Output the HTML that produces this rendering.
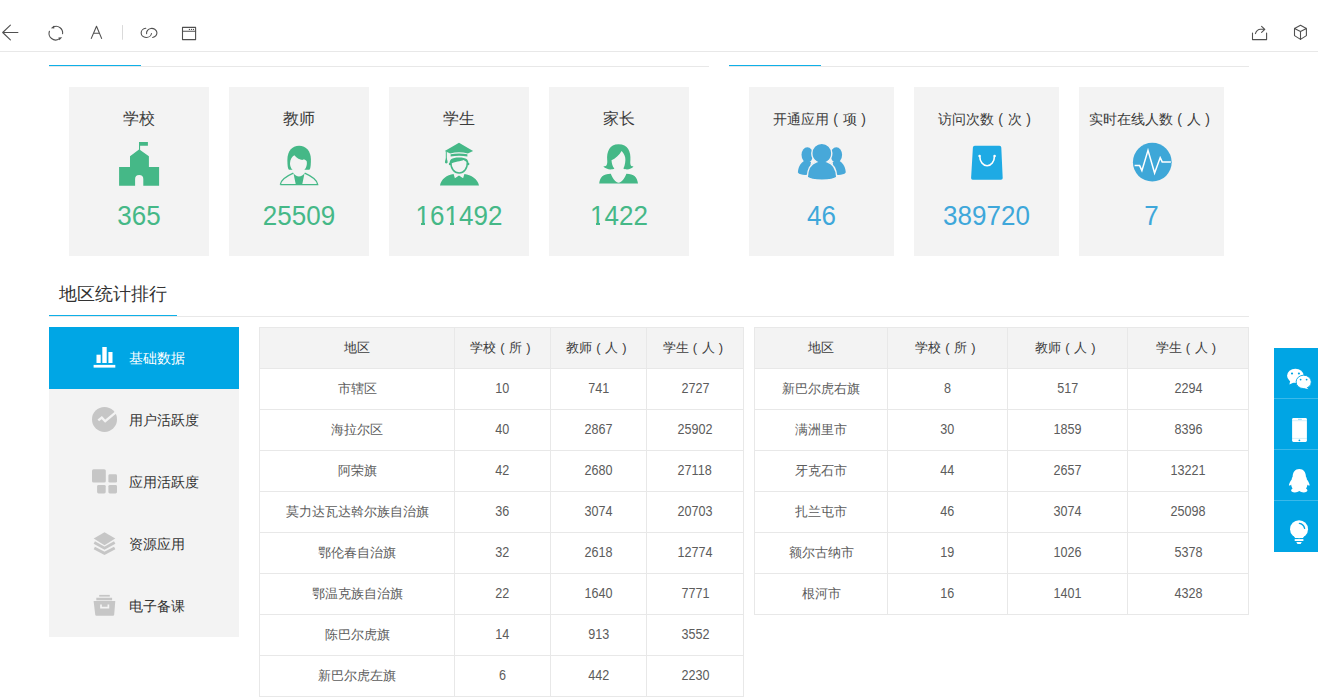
<!DOCTYPE html>
<html><head><meta charset="utf-8">
<style>
*{box-sizing:border-box;margin:0;padding:0}
html,body{width:1318px;height:698px;overflow:hidden;background:#fff}
body{position:relative;font-family:"Liberation Sans",sans-serif;color:#333}
.abs{position:absolute}
.tb{position:absolute;left:0;top:0;width:1318px;height:52px;border-bottom:1px solid #e8e8e8;background:#fff}
.hl{position:absolute;height:1px;background:#e8e8e8}
.bl{position:absolute;height:1px;background:#0eb0e8}
.card{position:absolute;top:87px;height:169px;background:#f3f3f3;text-align:center}
.ct{position:absolute;left:0;right:0;top:17px;line-height:30px;color:#3c3c3c;white-space:nowrap}
.cn{position:absolute;left:0;right:0;top:114px;font-size:26px;line-height:30px;transform:scaleY(1.05);transform-origin:50% 70%}
svg{position:absolute;overflow:visible}
i.p{display:inline-block;width:1em;text-align:center;font-style:normal}
.menu{position:absolute;left:49px;top:327px;width:190px;height:310px;background:#f3f3f3}
.mi{position:absolute;left:0;width:190px;height:62px;font-size:14px;color:#333}
.mi span{position:absolute;left:80px;top:0;line-height:62px;white-space:nowrap}
.mi.on{background:#00a6e5;color:#fff}
.tbl{position:absolute;top:327px;border-left:1px solid #e8e8e8;border-top:1px solid #e8e8e8}
.row{display:flex;height:41px}
.row.h{background:#f3f3f3}
.c{border-right:1px solid #e8e8e8;border-bottom:1px solid #e8e8e8;text-align:center;line-height:40px;font-size:13px;color:#5c5c5c;white-space:nowrap}
.row.h .c{color:#3c3c3c}
b.d{font-weight:normal;display:inline-block;transform:scale(0.97,1.1);transform-origin:50% 24px}
.side{position:absolute;left:1274px;top:348px;width:44px;height:204px;background:#00a5e4}
.si{position:absolute;left:0;width:44px;height:1px;background:#3ab9ea}
</style></head><body>
<div class="tb"><svg style="left:0;top:0" width="1318" height="52" viewBox="0 0 1318 52"><g fill="none" stroke="#505050" stroke-width="1.1" stroke-linecap="round" stroke-linejoin="round"><path d="M17.9 32.5H2.7M10.4 25.1L2.7 32.5L10.4 39.9"/><path d="M53.6 26.8A6.6 6.6 0 0 1 62.6 33.8"/><path d="M49.4 31.2A6.6 6.6 0 0 0 59.2 38.9"/><path d="M91.3 38.4L96.5 26.2L101.6 38.4M93.6 33.2H99.4"/><path d="M145.8 28.3A5.2 4.6 0 1 0 151.5 33.5"/><path d="M146.6 33.7A5.2 4.6 0 1 1 152.6 37.5"/><rect x="182.5" y="27.4" width="13.1" height="12.2"/><path d="M182.5 31.3H195.6"/><path d="M1252.5 33V39.6H1266.6V33"/><path d="M1255.4 33.6Q1257 29.3 1260.5 29.3H1264.8M1261.6 26.3L1264.8 29.3L1261.6 32.4"/><path d="M1300.5 25.3L1306.4 28.4V35.6L1300.5 39.4L1294.5 35.6V28.4ZM1294.5 28.4L1300.5 31.5L1306.4 28.4M1300.5 31.5V39.4"/></g><g fill="#505050"><path d="M50.8 28.2L54.2 25.6L54.3 28.6Z"/><path d="M62.2 37.3L58.4 37.6L59.4 40.2Z"/><circle cx="189.4" cy="29.4" r="0.65"/><circle cx="191.5" cy="29.4" r="0.65"/><circle cx="193.5" cy="29.4" r="0.65"/></g><path d="M122.5 25.1V39.7" stroke="#dadada" stroke-width="1"/></svg></div>
<div class="hl" style="left:49px;top:66px;width:660px"></div>
<div class="bl" style="left:49px;top:65px;width:92px"></div>
<div class="hl" style="left:729px;top:66px;width:520px"></div>
<div class="bl" style="left:729px;top:65px;width:92px"></div>
<div class="card" style="left:69px;width:140px">
<div class="ct" style="font-size:16px">学校</div>
<div class="cn" style="color:#45b887">365</div>
</div>
<div class="card" style="left:229px;width:140px">
<div class="ct" style="font-size:16px">教师</div>
<div class="cn" style="color:#45b887">25509</div>
</div>
<div class="card" style="left:389px;width:140px">
<div class="ct" style="font-size:16px">学生</div>
<div class="cn" style="color:#45b887">161492</div>
</div>
<div class="card" style="left:549px;width:140px">
<div class="ct" style="font-size:16px">家长</div>
<div class="cn" style="color:#45b887">1422</div>
</div>
<div class="card" style="left:749px;width:145px">
<div class="ct" style="font-size:14px">开通应用<i class="p">(</i>项<i class="p">)</i></div>
<div class="cn" style="color:#3ea7da">46</div>
</div>
<div class="card" style="left:914px;width:145px">
<div class="ct" style="font-size:14px">访问次数<i class="p">(</i>次<i class="p">)</i></div>
<div class="cn" style="color:#3ea7da">389720</div>
</div>
<div class="card" style="left:1079px;width:145px">
<div class="ct" style="font-size:14px">实时在线人数<i class="p">(</i>人<i class="p">)</i></div>
<div class="cn" style="color:#3ea7da">7</div>
</div>
<div class="abs" style="left:416px;top:222.6px;width:5px;height:2.6px;background:#f3f3f3"></div><div class="abs" style="left:425px;top:222.6px;width:5px;height:2.6px;background:#f3f3f3"></div><div class="abs" style="left:445px;top:222.6px;width:5px;height:2.6px;background:#f3f3f3"></div><div class="abs" style="left:454px;top:222.6px;width:5px;height:2.6px;background:#f3f3f3"></div><div class="abs" style="left:590px;top:222.6px;width:6px;height:2.6px;background:#f3f3f3"></div><div class="abs" style="left:600px;top:222.6px;width:5px;height:2.6px;background:#f3f3f3"></div><svg style="left:114px;top:138px" width="50" height="52" viewBox="0 0 50 52"><path fill="#45b887" d="M25 4.1h8.9v3.7H26.1v4.2L34.9 18.3V29.1H45.1V47.7H29.3V41A4.1 4.1 0 0 0 21.1 41V47.7H5.1V29.1H16V18.3L25 11.6Z"/></svg>
<svg style="left:274px;top:138px" width="50" height="52" viewBox="0 0 50 52"><path fill="#45b887" d="M15 31.8C13.7 30.6 13.4 27 13.4 21.5C13.4 13.5 18 7.8 25.1 7.8C32.2 7.8 36.9 13.5 36.9 21.5C36.9 27 36.6 30.6 35.3 31.8Z"/>
<path fill="#f3f3f3" d="M20.3 17.2C23 20.3 25.8 21.6 28.4 21.9C29.6 21.2 31.6 21.6 32.8 23.4C33.6 30 29.2 34.6 24.6 34.6C19.8 34.6 15.8 30.2 16 25.2C16.2 21.2 18 18.6 20.3 17.2Z"/>
<path fill="none" stroke="#45b887" stroke-width="1.3" d="M6.3 46.6C6.8 42.5 11.5 38.6 19.3 35.2M30.7 35.2C38.5 38.6 43.2 42.5 43.7 46.6H6.3"/>
<path fill="#45b887" d="M19.4 35C22 39.5 28 39.5 30.6 35L28.2 46.6H21.8Z"/></svg>
<svg style="left:434px;top:138px" width="50" height="52" viewBox="0 0 50 52"><path fill="#45b887" d="M10.8 13L25 4.8L39.1 13L33.8 15.4C28 14 22 14 16.2 15.4Z"/>
<path fill="#45b887" d="M16.6 16.3C22 15.1 28 15.1 33.4 16.3V18.6C28 17.6 22 17.6 16.6 18.6Z"/>
<path fill="#45b887" d="M15.8 26C15.2 21.5 17.5 19.4 25 19.4C32.5 19.4 34.8 21.5 34.2 26C33 24 31 22.6 29.6 21.9C27 23.2 21 23.2 15.8 26Z"/>
<path fill="none" stroke="#45b887" stroke-width="1.5" d="M16.8 23.5C16.6 31 20.4 35 25.1 35C29.8 35 33.6 31 33.4 23.5"/>
<circle cx="16" cy="26" r="1.2" fill="#45b887"/><circle cx="34.2" cy="26" r="1.2" fill="#45b887"/>
<path fill="none" stroke="#45b887" stroke-width="1" d="M12.3 13.4V21"/>
<path fill="#45b887" d="M12.3 19.5C13.2 21.5 13.8 23.5 13.6 24.8Q12.3 26.2 11 24.8C10.8 23.5 11.4 21.5 12.3 19.5Z"/>
<path fill="#45b887" d="M6 47.6C7 41 13 37 19.6 36L20.9 40.2L25 37.6L29.1 40.2L30.4 36C37 37 44 41 45 47.6Z"/></svg>
<svg style="left:594px;top:138px" width="50" height="52" viewBox="0 0 50 52"><path fill="#45b887" d="M24.5 6.3C34 6.3 37 14 36.4 22C36 26.5 36.6 28.8 39.5 28.3C37.5 31.8 31.5 32 29.4 30.5C31 27.5 31.8 22.5 31.2 19.5C30.6 16.8 29 14.5 27.6 13C25.2 17.2 21.4 20.5 17.5 22.2C17.8 25.8 18.6 28.8 20.4 30.5C18 32 12 31.8 9.3 28.3C12.6 28.8 13.6 26.5 13.2 22C12.6 14 15.5 6.3 24.5 6.3Z"/>
<path fill="#45b887" d="M5.2 45.6C5.8 39.5 9 35.8 16.8 35.8C19 41.5 22 44.7 24.6 44.7S30.2 41.5 32.4 35.8C40 35.8 43.4 39.5 44 45.6Z"/></svg>
<svg style="left:796px;top:138px" width="50" height="52" viewBox="0 0 50 52"><g fill="#47a8d9">
<ellipse cx="11.3" cy="16.8" rx="5.8" ry="7.6"/><path d="M9 22.2C4 25 1.9 30 1.9 34.6C3.5 37 8 37.2 12.5 36.8L15 24Z"/>
<ellipse cx="40.3" cy="16.8" rx="5.8" ry="7.6"/><path d="M42.6 22.2C47.6 25 49.7 30 49.7 34.6C48.1 37 43.6 37.2 39.1 36.8L36.6 24Z"/>
</g>
<g fill="#47a8d9" stroke="#f3f3f3" stroke-width="1.4">
<path d="M25.8 5.4C31.6 5.4 35.8 9.8 35.8 15.3C35.8 19 33.8 22.2 31.2 23.8C37 25.5 40.4 30 40.8 39.4C36.5 43 15.5 43 11.2 39.4C11.6 30 15 25.5 20.6 23.8C17.8 22.2 15.8 19 15.8 15.3C15.8 9.8 20 5.4 25.8 5.4Z"/>
</g></svg>
<svg style="left:961px;top:138px" width="50" height="52" viewBox="0 0 50 52"><path fill="#1eaae4" d="M13.8 7.8H38.4Q40.2 7.8 40.3 9.6L41.7 40Q41.8 41.7 40 41.7H11.7Q10 41.7 10.1 40L11.9 9.6Q12 7.8 13.8 7.8Z"/>
<path fill="none" stroke="#fff" stroke-width="1.6" d="M18.8 18.4A7.3 9.4 0 0 0 33.4 18.4"/>
<circle cx="18.6" cy="18" r="1.3" fill="#fff"/><circle cx="33.6" cy="18" r="1.3" fill="#fff"/></svg>
<svg style="left:1126px;top:138px" width="50" height="52" viewBox="0 0 50 52"><circle cx="26.3" cy="24.2" r="19.4" fill="#3ea7d8"/>
<path fill="none" stroke="#fff" stroke-width="1.5" stroke-linejoin="miter" d="M8.6 27.6H13.6L15.9 32.6L22 12.4L28.6 35L34.2 19.6L36.2 23.9H44.9"/></svg>
<div class="abs" style="left:59px;top:279px;font-size:18px;line-height:30px;color:#333">地区统计排行</div>
<div class="hl" style="left:49px;top:316px;width:1200px"></div>
<div class="bl" style="left:49px;top:315px;width:128px"></div>
<div class="menu">
<div class="mi on" style="top:0px"><span>基础数据</span></div>
<div class="mi" style="top:62px"><span>用户活跃度</span></div>
<div class="mi" style="top:124px"><span>应用活跃度</span></div>
<div class="mi" style="top:186px"><span>资源应用</span></div>
<div class="mi" style="top:248px"><span>电子备课</span></div>
</div>
<svg style="left:0;top:0;pointer-events:none" width="1318" height="698" viewBox="0 0 1318 698">
<g fill="#fff"><rect x="96.5" y="354.7" width="4.2" height="8.3"/><rect x="102.3" y="347" width="4.4" height="16"/><rect x="108.4" y="352" width="4.1" height="11"/><rect x="93.6" y="364.9" width="21.7" height="2.7"/></g>
<g fill="#c6c6c6">
<circle cx="104.5" cy="419.4" r="12.5"/>
<rect x="92" y="469.2" width="13.8" height="13.4" rx="1.6"/><rect x="108.4" y="474.3" width="8.6" height="8.3" rx="1.4"/><rect x="97.1" y="484.9" width="8.6" height="8.5" rx="1.4"/><rect x="108.4" y="484.9" width="8.6" height="8.5" rx="1.4"/>
<path d="M93.7 538.6L104.5 532.3L115.3 538.6L104.5 545.2Z"/>
<path d="M93.6 600.9H115.3L114.2 614.6Q114.1 615.8 112.9 615.8H96.5Q95.3 615.8 95.2 614.6Z"/>
<rect x="99.2" y="594.9" width="10.6" height="1.7"/><rect x="96.3" y="597.75" width="15.8" height="2.55"/>
</g>
<g fill="none" stroke="#c6c6c6" stroke-width="2.8" stroke-linejoin="miter">
<path d="M94.3 542.6L104.5 548.2L114.7 542.6"/><path d="M94.3 547.9L104.5 553.3L114.7 547.9"/>
</g>
<path d="M98.3 420.4L101.8 417.6L105.2 421.2L115.8 412.4" fill="none" stroke="#f3f3f3" stroke-width="2.4"/>
<path d="M101 604.6V607.6H108.4V604.6" fill="none" stroke="#f3f3f3" stroke-width="1.7"/>
</svg><div class="tbl" style="left:259px;width:485px">
<div class="row h"><div class="c" style="width:195px">地区</div><div class="c" style="width:96px">学校<i class="p">(</i>所<i class="p">)</i></div><div class="c" style="width:96px">教师<i class="p">(</i>人<i class="p">)</i></div><div class="c" style="width:97px">学生<i class="p">(</i>人<i class="p">)</i></div></div>
<div class="row"><div class="c" style="width:195px">市辖区</div><div class="c" style="width:96px"><b class="d">10</b></div><div class="c" style="width:96px"><b class="d">741</b></div><div class="c" style="width:97px"><b class="d">2727</b></div></div>
<div class="row"><div class="c" style="width:195px">海拉尔区</div><div class="c" style="width:96px"><b class="d">40</b></div><div class="c" style="width:96px"><b class="d">2867</b></div><div class="c" style="width:97px"><b class="d">25902</b></div></div>
<div class="row"><div class="c" style="width:195px">阿荣旗</div><div class="c" style="width:96px"><b class="d">42</b></div><div class="c" style="width:96px"><b class="d">2680</b></div><div class="c" style="width:97px"><b class="d">27118</b></div></div>
<div class="row"><div class="c" style="width:195px">莫力达瓦达斡尔族自治旗</div><div class="c" style="width:96px"><b class="d">36</b></div><div class="c" style="width:96px"><b class="d">3074</b></div><div class="c" style="width:97px"><b class="d">20703</b></div></div>
<div class="row"><div class="c" style="width:195px">鄂伦春自治旗</div><div class="c" style="width:96px"><b class="d">32</b></div><div class="c" style="width:96px"><b class="d">2618</b></div><div class="c" style="width:97px"><b class="d">12774</b></div></div>
<div class="row"><div class="c" style="width:195px">鄂温克族自治旗</div><div class="c" style="width:96px"><b class="d">22</b></div><div class="c" style="width:96px"><b class="d">1640</b></div><div class="c" style="width:97px"><b class="d">7771</b></div></div>
<div class="row"><div class="c" style="width:195px">陈巴尔虎旗</div><div class="c" style="width:96px"><b class="d">14</b></div><div class="c" style="width:96px"><b class="d">913</b></div><div class="c" style="width:97px"><b class="d">3552</b></div></div>
<div class="row"><div class="c" style="width:195px">新巴尔虎左旗</div><div class="c" style="width:96px"><b class="d">6</b></div><div class="c" style="width:96px"><b class="d">442</b></div><div class="c" style="width:97px"><b class="d">2230</b></div></div>
</div>
<div class="tbl" style="left:754px;width:495px">
<div class="row h"><div class="c" style="width:133px">地区</div><div class="c" style="width:120px">学校<i class="p">(</i>所<i class="p">)</i></div><div class="c" style="width:120px">教师<i class="p">(</i>人<i class="p">)</i></div><div class="c" style="width:121px">学生<i class="p">(</i>人<i class="p">)</i></div></div>
<div class="row"><div class="c" style="width:133px">新巴尔虎右旗</div><div class="c" style="width:120px"><b class="d">8</b></div><div class="c" style="width:120px"><b class="d">517</b></div><div class="c" style="width:121px"><b class="d">2294</b></div></div>
<div class="row"><div class="c" style="width:133px">满洲里市</div><div class="c" style="width:120px"><b class="d">30</b></div><div class="c" style="width:120px"><b class="d">1859</b></div><div class="c" style="width:121px"><b class="d">8396</b></div></div>
<div class="row"><div class="c" style="width:133px">牙克石市</div><div class="c" style="width:120px"><b class="d">44</b></div><div class="c" style="width:120px"><b class="d">2657</b></div><div class="c" style="width:121px"><b class="d">13221</b></div></div>
<div class="row"><div class="c" style="width:133px">扎兰屯市</div><div class="c" style="width:120px"><b class="d">46</b></div><div class="c" style="width:120px"><b class="d">3074</b></div><div class="c" style="width:121px"><b class="d">25098</b></div></div>
<div class="row"><div class="c" style="width:133px">额尔古纳市</div><div class="c" style="width:120px"><b class="d">19</b></div><div class="c" style="width:120px"><b class="d">1026</b></div><div class="c" style="width:121px"><b class="d">5378</b></div></div>
<div class="row"><div class="c" style="width:133px">根河市</div><div class="c" style="width:120px"><b class="d">16</b></div><div class="c" style="width:120px"><b class="d">1401</b></div><div class="c" style="width:121px"><b class="d">4328</b></div></div>
</div>
<div class="side"><div class="si" style="top:50px"></div><div class="si" style="top:101px"></div><div class="si" style="top:152px"></div></div>
<svg style="left:0;top:0;pointer-events:none" width="1318" height="698" viewBox="0 0 1318 698">
<g fill="#fff">
<ellipse cx="1295.4" cy="375.8" rx="8.3" ry="7.1"/><path d="M1290.3 380.5L1289.4 384.4L1294.3 382.3Z"/>
<ellipse cx="1303.7" cy="381.9" rx="7.6" ry="6.7" stroke="#00a5e4" stroke-width="0.9"/><path d="M1305.8 386.4L1308.5 389.2L1303.8 387.9Z"/>
<rect x="1292.1" y="418" width="14.8" height="23.9" rx="1.3"/>
<path d="M1299.3 469C1303.5 469 1305.9 472.5 1305.9 476.5C1306.5 477.5 1307 478.5 1306.9 479.5C1308.5 481.5 1309.7 484 1309.7 485.4C1309 486 1308 485.2 1307.5 484.5C1307.3 486 1306.7 487.5 1306 488.5C1307.6 489.5 1308 490.8 1306.5 491.8C1304.5 492.8 1301 492.5 1299.3 491C1297.6 492.5 1294 492.8 1292 491.8C1290.5 490.8 1291 489.5 1292.6 488.5C1291.9 487.5 1291.3 486 1291.1 484.5C1290.6 485.2 1289.6 486 1288.9 485.4C1288.9 484 1290.1 481.5 1291.7 479.5C1291.6 478.5 1292.1 477.5 1292.7 476.5C1292.7 472.5 1295.1 469 1299.3 469Z"/>
<circle cx="1299.05" cy="529.2" r="9"/><path d="M1293.6 535L1295 537.9H1303L1304.5 535Z"/>
<rect x="1294.7" y="539.1" width="8.7" height="1.9"/><path d="M1296.3 542.1H1301.8L1300.6 544H1297.5Z"/>
</g>
<g fill="#00a5e4"><circle cx="1292" cy="373.5" r="1.1"/><circle cx="1298.9" cy="373.5" r="1.1"/><circle cx="1300.6" cy="379.6" r="0.9"/><circle cx="1306.6" cy="379.6" r="0.9"/>
<circle cx="1299.4" cy="440.3" r="0.9"/></g>
<g fill="none" stroke="#00a5e4">
<path d="M1292.1 420.7H1306.9M1292.1 438.4H1306.9" stroke-width="0.5" stroke-opacity="0.35"/>
<path d="M1298 419.3H1301.8" stroke-width="0.7" stroke-opacity="0.6"/>
<path d="M1299.4 523.4Q1303.6 524 1304.6 528.4" stroke-width="1.4" stroke-linecap="round"/>
</g>
</svg></body></html>
